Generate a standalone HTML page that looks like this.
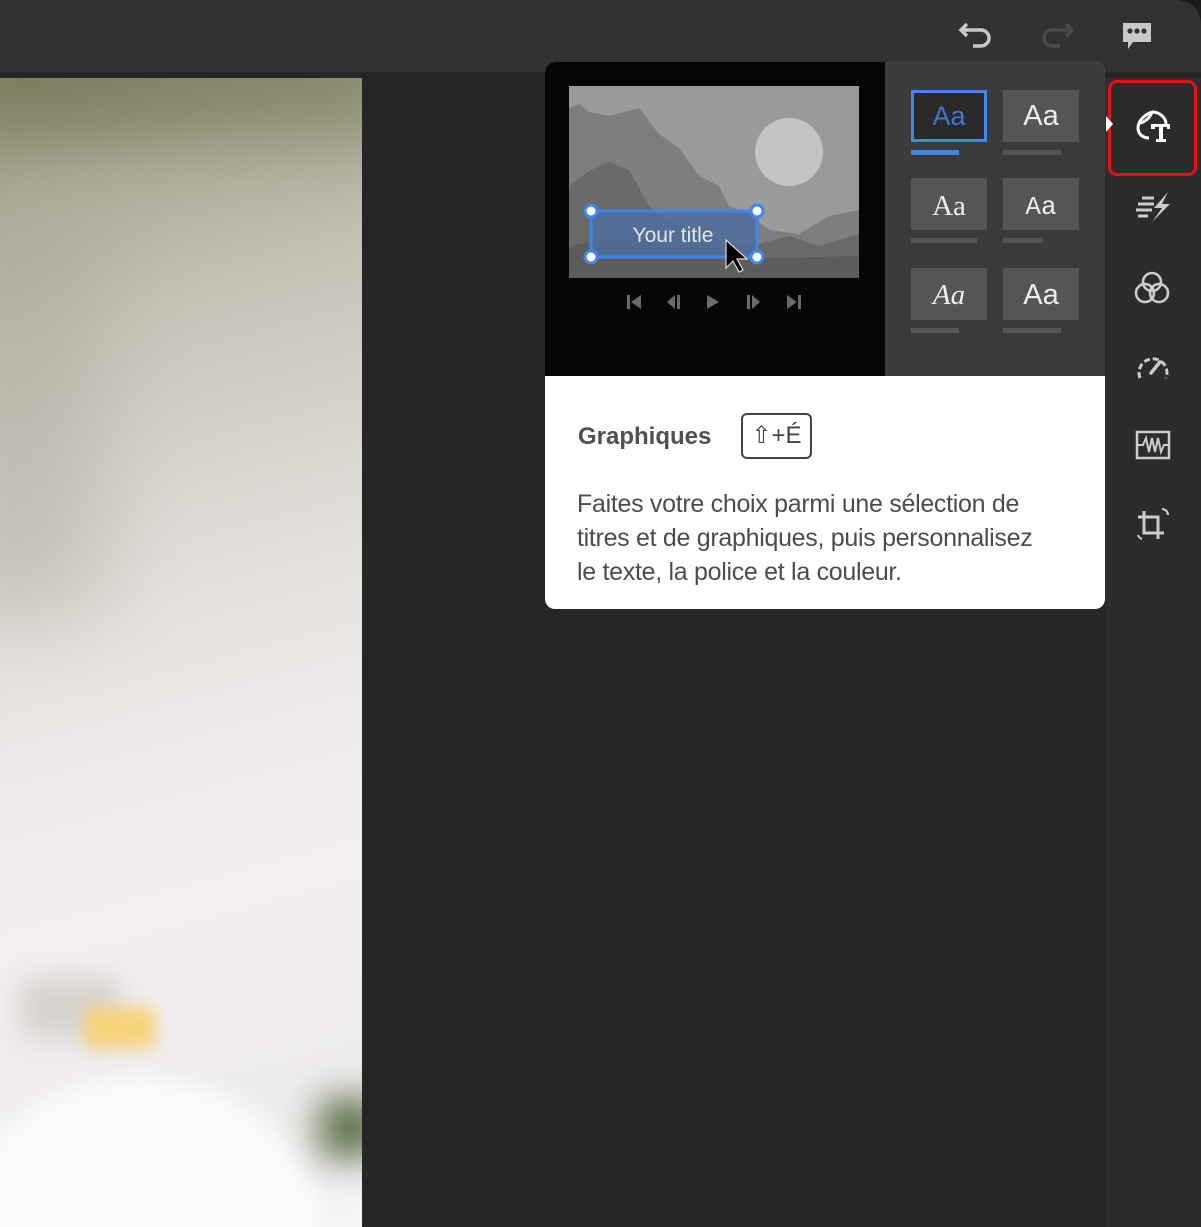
<!DOCTYPE html>
<html style="overflow:hidden"><head><meta charset="utf-8"><style>
*{margin:0;padding:0;box-sizing:border-box}
html,body{width:1201px;height:1227px;overflow:hidden}
body{background:#1b1b1b;position:relative;font-family:"Liberation Sans","DejaVu Sans",sans-serif}
.abs{position:absolute}
</style></head><body>
<div class="abs" style="left:0;top:0;width:1201px;height:72px;background:#323232;border-top-right-radius:24px"></div>
<div class="abs" style="left:0;top:72px;width:1201px;height:1155px;background:#262626"></div>
<!-- photo -->
<div class="abs" style="left:0;top:78px;width:362px;height:1149px;overflow:hidden;background:linear-gradient(165deg,#8d8b70 0%,#aeab98 10%,#c6c2b6 22%,#d6d2cb 34%,#e4e0dc 46%,#eeeaea 58%,#f3eff1 70%,#f0ecee 82%,#eceaea 92%,#f6f6f8 100%)">
 <div class="abs" style="left:-40px;top:-50px;width:440px;height:110px;background:#6d7150;filter:blur(35px);opacity:.55"></div>
 <div class="abs" style="left:-60px;top:120px;width:160px;height:420px;background:#aaa698;filter:blur(45px);opacity:.45"></div>
 <div class="abs" style="left:-40px;top:1000px;width:360px;height:300px;border-radius:50%;background:#fbfbfc;filter:blur(12px)"></div>
 <div class="abs" style="left:20px;top:900px;width:100px;height:60px;background:#c8c4bc;filter:blur(15px);opacity:.7"></div>
 <div class="abs" style="left:85px;top:930px;width:70px;height:40px;background:#f6d278;filter:blur(8px)"></div>
 <div class="abs" style="left:320px;top:1020px;width:60px;height:60px;background:#5b6e48;filter:blur(18px)"></div>
</div>
<div class="abs" style="left:1105px;top:78px;width:96px;height:1149px;background:#2c2c2c"></div>
<svg class="abs" style="left:955px;top:18px" width="40" height="34" viewBox="0 0 40 34"><path d="M12 6 L6 12 L12 18 M6 12 H26 a8 8 0 0 1 0 16 H18" fill="none" stroke="#c9c9c9" stroke-width="3.5"/></svg>
<svg class="abs" style="left:1038px;top:18px" width="40" height="34" viewBox="0 0 40 34"><path d="M28 6 L34 12 L28 18 M34 12 H14 a8 8 0 0 0 0 16 H22" fill="none" stroke="#4a4a4a" stroke-width="3.5"/></svg>
<svg class="abs" style="left:1120px;top:20px" width="34" height="32" viewBox="0 0 34 32"><path d="M3 3 H31 V22 H13 L8 29 V22 H3 Z" fill="#c9c9c9"/><circle cx="10" cy="11" r="2.6" fill="#333"/><circle cx="17" cy="11" r="2.6" fill="#333"/><circle cx="24" cy="11" r="2.6" fill="#333"/></svg>
<div class="abs" style="left:1108px;top:80px;width:89px;height:96px;border:3px solid #e81018;border-radius:9px"></div>
<svg class="abs" style="left:1104px;top:115px" width="10" height="18"><path d="M2 1 L9 9 L2 17 Z" fill="#fff"/></svg>
<svg class="abs" style="left:1134px;top:106px" width="40" height="40" viewBox="0 0 40 40"><path d="M18 6 C12 8 4 14 4 22 C4 29 10 32 15 32" fill="none" stroke="#fff" stroke-width="3"/><path d="M18 6 C26 6 32 12 32 18 M18 6 C16 12 11 16 6 17" fill="none" stroke="#fff" stroke-width="3"/><path d="M17 18 H36 V23 H33 V21 H29 V33 H32 V36 H22 V33 H25 V21 H21 V23 H17 Z" fill="#fff"/></svg>
<svg class="abs" style="left:1134px;top:190px" width="38" height="34" viewBox="0 0 38 34"><path d="M8 8 H20 M4 14 H20 M2 20 H18 M4 26 H14" stroke="#ccc" stroke-width="3"/><path d="M34 2 L20 18 H28 L18 32 L36 14 H28 Z" fill="#ccc"/></svg>
<svg class="abs" style="left:1133px;top:270px" width="38" height="36" viewBox="0 0 38 36"><g fill="none" stroke="#ccc" stroke-width="2.6"><circle cx="19" cy="12" r="9"/><circle cx="12" cy="23" r="9"/><circle cx="26" cy="23" r="9"/></g></svg>
<svg class="abs" style="left:1134px;top:348px" width="38" height="34" viewBox="0 0 38 34"><path d="M6 30 A14 14 0 1 1 32 30" fill="none" stroke="#ccc" stroke-width="3" stroke-dasharray="6 3"/><path d="M17 25 L26 14" stroke="#ccc" stroke-width="3.5" stroke-linecap="round"/></svg>
<svg class="abs" style="left:1135px;top:430px" width="36" height="30" viewBox="0 0 36 30"><rect x="2" y="2" width="32" height="26" fill="none" stroke="#ccc" stroke-width="2.5"/><path d="M2 15 H8 L11 8 L14 22 L17 8 L20 22 L23 8 L26 22 L29 15 H34" fill="none" stroke="#ccc" stroke-width="2"/></svg>
<svg class="abs" style="left:1134px;top:505px" width="38" height="40" viewBox="0 0 38 40"><path d="M10 6 V28 H30 M4 12 H24 V34" fill="none" stroke="#ccc" stroke-width="3"/><path d="M28 4 a6 6 0 0 1 6 6 M8 34 a6 6 0 0 1 -4 -4" fill="none" stroke="#ccc" stroke-width="2"/></svg>

<div class="abs" style="left:545px;top:62px;width:560px;height:547px;border-radius:10px;overflow:hidden;background:#fff">
 <div class="abs" style="left:0;top:0;width:340px;height:314px;background:#060606"></div>
 <div class="abs" style="left:340px;top:0;width:220px;height:314px;background:#3b3b3b"></div>
 <svg class="abs" style="left:24px;top:24px" width="290" height="192" viewBox="0 0 290 192">
  <rect width="290" height="192" fill="#9a9a9a"/>
  <circle cx="220" cy="66" r="34" fill="#c4c4c4"/>
  <path d="M0 22 L10 18 L20 26 L40 30 L70 22 L90 48 L110 62 L130 90 L150 100 L160 120 L180 128 L200 144 L230 148 L260 130 L290 124 V192 H0 Z" fill="#7e7e7e"/>
  <path d="M0 100 L20 85 L40 76 L60 84 L80 120 L110 140 L150 150 L180 160 L220 150 L250 160 L290 148 V192 H0 Z" fill="#6a6a6a"/>
  <path d="M0 160 L60 150 L140 164 L200 172 L290 170 V192 H0 Z" fill="#5c5c5c"/>
  <rect x="22" y="125" width="166" height="46" fill="#4e6e9e" opacity=".85"/>
  <rect x="22" y="125" width="166" height="46" fill="none" stroke="#3d86ef" stroke-width="3"/>
  <text x="104" y="156" text-anchor="middle" font-size="21" fill="#e6e6e6" font-family="Liberation Sans">Your title</text>
  <g fill="#fff" stroke="#3d86ef" stroke-width="3"><circle cx="22" cy="125" r="6"/><circle cx="188" cy="125" r="6"/><circle cx="22" cy="171" r="6"/><circle cx="188" cy="171" r="6"/></g>
  <path d="M157 154 L157 182 L164 175 L170 186 L174 184 L168 173 L178 173 Z" fill="#000" stroke="#ddd" stroke-width="1.2"/>
 </svg>
 <svg class="abs" style="left:78px;top:230px" width="184" height="20" viewBox="0 0 184 20" fill="#6a6a6a">
  <rect x="4" y="3" width="3" height="14"/><path d="M18 3 L8 10 L18 17Z"/>
  <path d="M52 3 L44 10 L52 17Z"/><rect x="54" y="3" width="3" height="14"/>
  <path d="M84 3 L96 10 L84 17Z"/>
  <rect x="124" y="3" width="3" height="14"/><path d="M129 3 L137 10 L129 17Z"/>
  <path d="M164 3 L174 10 L164 17Z"/><rect x="175" y="3" width="3" height="14"/>
 </svg>
 <div class="abs" style="left:366px;top:28px;width:76px;height:52px;border:3px solid #3d86ef;background:#2a2a2a;color:#3d78d0;font-size:27px;text-align:center;line-height:46px">Aa</div>
 <div class="abs" style="left:366px;top:88px;width:48px;height:5px;background:#3d86ef"></div>
 <div class="abs" style="left:458px;top:28px;width:76px;height:52px;background:#555;color:#eee;font-size:29px;text-align:center;line-height:52px">Aa</div>
 <div class="abs" style="left:458px;top:88px;width:58px;height:5px;background:#555"></div>
 <div class="abs" style="left:366px;top:116px;width:76px;height:52px;background:#555;color:#eee;font-size:29px;text-align:center;line-height:56px;font-family:'Liberation Serif',serif">Aa</div>
 <div class="abs" style="left:366px;top:176px;width:66px;height:5px;background:#555"></div>
 <div class="abs" style="left:458px;top:116px;width:76px;height:52px;background:#555;color:#eee;font-size:26px;text-align:center;line-height:58px;font-family:'Liberation Mono',monospace">Aa</div>
 <div class="abs" style="left:458px;top:176px;width:40px;height:5px;background:#555"></div>
 <div class="abs" style="left:366px;top:206px;width:76px;height:52px;background:#555;color:#eee;font-size:29px;text-align:center;line-height:54px;font-family:'Liberation Serif',serif;font-style:italic">Aa</div>
 <div class="abs" style="left:366px;top:266px;width:48px;height:5px;background:#555"></div>
 <div class="abs" style="left:458px;top:206px;width:76px;height:52px;background:#555;color:#eee;font-size:29px;text-align:center;line-height:54px">Aa</div>
 <div class="abs" style="left:458px;top:266px;width:58px;height:5px;background:#555"></div>
 <div class="abs" style="left:33px;top:361px;font-size:24px;font-weight:bold;color:#505050">Graphiques</div>
 <div class="abs" style="left:196px;top:351px;width:71px;height:46px;border:2.5px solid #444;border-radius:6px;font-size:24px;color:#444;text-align:center;line-height:41px">⇧+É</div>
 <div class="abs" style="left:32px;top:425px;white-space:nowrap;font-size:25px;line-height:34px;color:#4c4c4c;letter-spacing:-0.3px">Faites votre choix parmi une sélection de<br>titres et de graphiques, puis personnalisez<br>le texte, la police et la couleur.</div>
</div>
</body></html>
